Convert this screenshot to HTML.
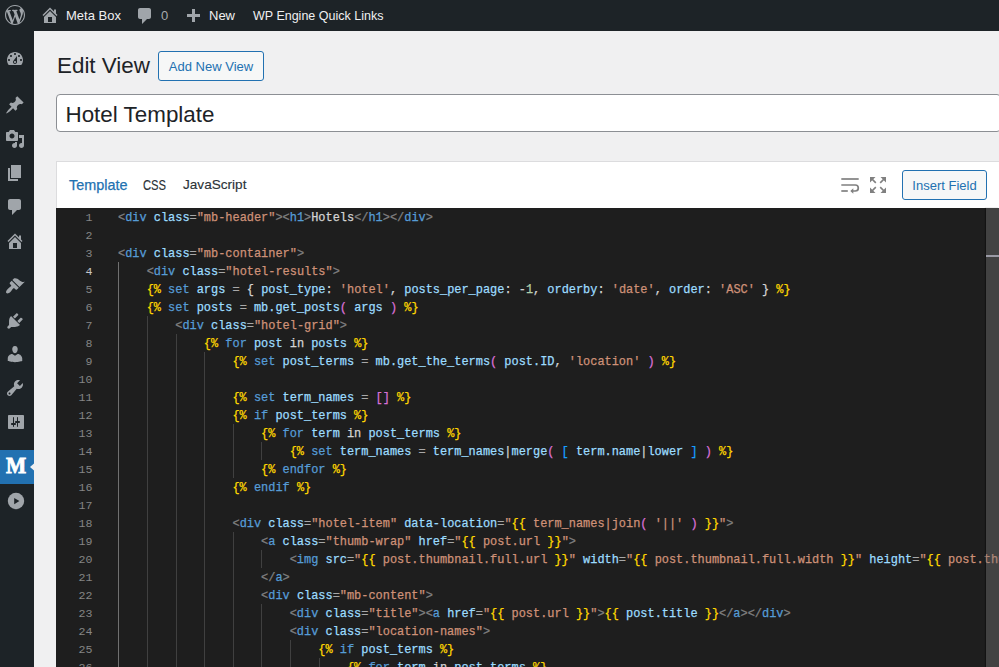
<!DOCTYPE html>
<html><head><meta charset="utf-8">
<style>
html,body{margin:0;padding:0;width:999px;height:667px;overflow:hidden;background:#f0f0f1;font-family:"Liberation Sans",sans-serif;}
.abs{position:absolute;}
.ic{position:absolute;overflow:visible;}
#adminbar{position:absolute;left:0;top:0;width:999px;height:31px;background:#1d2327;}
#sidebar{position:absolute;left:0;top:31px;width:34px;height:636px;background:#1d2327;}
.ab-t{position:absolute;top:0;height:31px;line-height:31px;font-size:13px;color:#f0f0f1;white-space:nowrap;}
.si{position:absolute;left:0;width:34px;}
h1{position:absolute;margin:0;left:57px;top:50px;font-size:22.4px;font-weight:400;color:#1d2327;line-height:32px;}
.btn{position:absolute;box-sizing:border-box;border:1px solid #2271b1;border-radius:3px;background:#f6f7f7;color:#2271b1;font-size:13px;text-align:center;white-space:nowrap;}
#title{position:absolute;box-sizing:border-box;left:56px;top:94px;width:945px;height:38px;border:1px solid #8c8f94;border-radius:4px;background:#fff;}
#title span{position:absolute;left:8.5px;top:0.5px;line-height:37px;font-size:22.4px;color:#1d2327;}
#panel{position:absolute;left:56px;top:161px;width:960px;height:520px;background:#fff;border-top:1px solid #dcdcde;border-left:1px solid #dcdcde;box-sizing:border-box;}
.tab{position:absolute;top:176px;font-size:14px;line-height:18px;color:#1d2327;white-space:nowrap;}
#editor{position:absolute;left:56px;top:208px;width:943px;height:459px;background:#1e1e1e;overflow:hidden;}
#ruler{position:absolute;left:986px;top:208px;width:13px;height:459px;background:rgba(121,121,121,0.4);box-shadow:-1px 0 1px rgba(0,0,0,0.35);}
#rmark{position:absolute;left:986px;top:255px;width:13px;height:2px;background:#9a9aa5;}
.ln{position:absolute;left:0;width:36.5px;text-align:right;color:#858585;font-family:"Liberation Mono",monospace;font-size:11.6px;height:18px;line-height:18px;}
.cl{position:absolute;left:62px;white-space:pre;-webkit-text-stroke:0.25px;font-family:"Liberation Mono",monospace;font-size:11.93px;height:18px;line-height:18px;color:#d4d4d4;}
.g{position:absolute;width:1px;height:18px;background:#404040;}.g.act{background:#707070}.ln.act{color:#c6c6c6}.m{color:#b5cea8}
.t{color:#808080}.n{color:#569cd6}.a{color:#9cdcfe}.s{color:#ce9178}.y{color:#ffd700}.p{color:#da70d6}.b{color:#179fff}.k{color:#569cd6}.v{color:#9cdcfe}.w{color:#d4d4d4}.e{color:#a8a8a8}
</style></head><body>
<div id="adminbar">
  <div class="ab-t" style="left:66px;">Meta Box</div>
  <div class="ab-t" style="left:161px;color:#a7aaad;">0</div>
  <div class="ab-t" style="left:209px;">New</div>
  <div class="ab-t" style="left:253px;top:0.6px;font-size:12.5px;">WP Engine Quick Links</div>
</div>
<div id="sidebar">
  
</div>

<h1>Edit View</h1>
<div class="btn" style="left:158px;top:51px;width:106px;height:30px;line-height:30px;">Add New View</div>
<div id="title"><span>Hotel Template</span></div>

<div id="panel"></div>
<div class="tab" style="left:69px;color:#2271b1;font-size:14.4px;-webkit-text-stroke:0.25px #2271b1;">Template</div>
<div class="tab" style="left:143px;color:#2c3338;transform:scaleX(0.8);transform-origin:0 0;-webkit-text-stroke:0.15px #2c3338;">CSS</div>
<div class="tab" style="left:183px;color:#2c3338;font-size:13.6px;-webkit-text-stroke:0.15px #2c3338;">JavaScript</div>
<div class="btn" style="left:902px;top:170px;width:85px;height:30px;line-height:30px;">Insert Field</div>

<div id="editor">
<div class="ln" style="top:0.7px">1</div>
<div class="cl" style="top:1px"><span class="t">&lt;</span><span class="n">div</span> <span class="a">class</span><span class="e">=</span><span class="s">&quot;mb-header&quot;</span><span class="t">&gt;&lt;</span><span class="n">h1</span><span class="t">&gt;</span><span class="w">Hotels</span><span class="t">&lt;/</span><span class="n">h1</span><span class="t">&gt;&lt;/</span><span class="n">div</span><span class="t">&gt;</span></div>
<div class="ln" style="top:18.7px">2</div>
<div class="cl" style="top:19px"></div>
<div class="ln" style="top:36.7px">3</div>
<div class="cl" style="top:37px"><span class="t">&lt;</span><span class="n">div</span> <span class="a">class</span><span class="e">=</span><span class="s">&quot;mb-container&quot;</span><span class="t">&gt;</span></div>
<div class="ln act" style="top:54.7px">4</div>
<div class="g act" style="top:54px;left:62px"></div>
<div class="cl" style="top:55px">    <span class="t">&lt;</span><span class="n">div</span> <span class="a">class</span><span class="e">=</span><span class="s">&quot;hotel-results&quot;</span><span class="t">&gt;</span></div>
<div class="ln" style="top:72.7px">5</div>
<div class="g act" style="top:72px;left:62px"></div>
<div class="cl" style="top:73px">    <span class="y">{%</span> <span class="k">set</span> <span class="v">args</span> <span class="e">=</span> <span class="w">{</span> <span class="v">post_type</span><span class="w">:</span> <span class="s">&#x27;hotel&#x27;</span><span class="w">,</span> <span class="v">posts_per_page</span><span class="w">:</span> <span class="w">-</span><span class="m">1</span><span class="w">,</span> <span class="v">orderby</span><span class="w">:</span> <span class="s">&#x27;date&#x27;</span><span class="w">,</span> <span class="v">order</span><span class="w">:</span> <span class="s">&#x27;ASC&#x27;</span> <span class="w">}</span> <span class="y">%}</span></div>
<div class="ln" style="top:90.7px">6</div>
<div class="g act" style="top:90px;left:62px"></div>
<div class="cl" style="top:91px">    <span class="y">{%</span> <span class="k">set</span> <span class="v">posts</span> <span class="e">=</span> <span class="v">mb.get_posts</span><span class="p">(</span> <span class="v">args</span> <span class="p">)</span> <span class="y">%}</span></div>
<div class="ln" style="top:108.7px">7</div>
<div class="g act" style="top:108px;left:62px"></div>
<div class="g" style="top:108px;left:91px"></div>
<div class="cl" style="top:109px">        <span class="t">&lt;</span><span class="n">div</span> <span class="a">class</span><span class="e">=</span><span class="s">&quot;hotel-grid&quot;</span><span class="t">&gt;</span></div>
<div class="ln" style="top:126.7px">8</div>
<div class="g act" style="top:126px;left:62px"></div>
<div class="g" style="top:126px;left:91px"></div>
<div class="g" style="top:126px;left:120px"></div>
<div class="cl" style="top:127px">            <span class="y">{%</span> <span class="k">for</span> <span class="v">post</span> <span class="w">in</span> <span class="v">posts</span> <span class="y">%}</span></div>
<div class="ln" style="top:144.7px">9</div>
<div class="g act" style="top:144px;left:62px"></div>
<div class="g" style="top:144px;left:91px"></div>
<div class="g" style="top:144px;left:120px"></div>
<div class="g" style="top:144px;left:148px"></div>
<div class="cl" style="top:145px">                <span class="y">{%</span> <span class="k">set</span> <span class="v">post_terms</span> <span class="e">=</span> <span class="v">mb.get_the_terms</span><span class="p">(</span> <span class="v">post.ID</span><span class="w">,</span> <span class="s">&#x27;location&#x27;</span> <span class="p">)</span> <span class="y">%}</span></div>
<div class="ln" style="top:162.7px">10</div>
<div class="g act" style="top:162px;left:62px"></div>
<div class="g" style="top:162px;left:91px"></div>
<div class="g" style="top:162px;left:120px"></div>
<div class="g" style="top:162px;left:148px"></div>
<div class="cl" style="top:163px">                </div>
<div class="ln" style="top:180.7px">11</div>
<div class="g act" style="top:180px;left:62px"></div>
<div class="g" style="top:180px;left:91px"></div>
<div class="g" style="top:180px;left:120px"></div>
<div class="g" style="top:180px;left:148px"></div>
<div class="cl" style="top:181px">                <span class="y">{%</span> <span class="k">set</span> <span class="v">term_names</span> <span class="e">=</span> <span class="p">[]</span> <span class="y">%}</span></div>
<div class="ln" style="top:198.7px">12</div>
<div class="g act" style="top:198px;left:62px"></div>
<div class="g" style="top:198px;left:91px"></div>
<div class="g" style="top:198px;left:120px"></div>
<div class="g" style="top:198px;left:148px"></div>
<div class="cl" style="top:199px">                <span class="y">{%</span> <span class="k">if</span> <span class="v">post_terms</span> <span class="y">%}</span></div>
<div class="ln" style="top:216.7px">13</div>
<div class="g act" style="top:216px;left:62px"></div>
<div class="g" style="top:216px;left:91px"></div>
<div class="g" style="top:216px;left:120px"></div>
<div class="g" style="top:216px;left:148px"></div>
<div class="g" style="top:216px;left:177px"></div>
<div class="cl" style="top:217px">                    <span class="y">{%</span> <span class="k">for</span> <span class="v">term</span> <span class="w">in</span> <span class="v">post_terms</span> <span class="y">%}</span></div>
<div class="ln" style="top:234.7px">14</div>
<div class="g act" style="top:234px;left:62px"></div>
<div class="g" style="top:234px;left:91px"></div>
<div class="g" style="top:234px;left:120px"></div>
<div class="g" style="top:234px;left:148px"></div>
<div class="g" style="top:234px;left:177px"></div>
<div class="g" style="top:234px;left:205px"></div>
<div class="cl" style="top:235px">                        <span class="y">{%</span> <span class="k">set</span> <span class="v">term_names</span> <span class="e">=</span> <span class="v">term_names</span><span class="w">|</span><span class="v">merge</span><span class="p">(</span> <span class="b">[</span> <span class="v">term.name</span><span class="w">|</span><span class="v">lower</span> <span class="b">]</span> <span class="p">)</span> <span class="y">%}</span></div>
<div class="ln" style="top:252.7px">15</div>
<div class="g act" style="top:252px;left:62px"></div>
<div class="g" style="top:252px;left:91px"></div>
<div class="g" style="top:252px;left:120px"></div>
<div class="g" style="top:252px;left:148px"></div>
<div class="g" style="top:252px;left:177px"></div>
<div class="cl" style="top:253px">                    <span class="y">{%</span> <span class="k">endfor</span> <span class="y">%}</span></div>
<div class="ln" style="top:270.7px">16</div>
<div class="g act" style="top:270px;left:62px"></div>
<div class="g" style="top:270px;left:91px"></div>
<div class="g" style="top:270px;left:120px"></div>
<div class="g" style="top:270px;left:148px"></div>
<div class="cl" style="top:271px">                <span class="y">{%</span> <span class="k">endif</span> <span class="y">%}</span></div>
<div class="ln" style="top:288.7px">17</div>
<div class="g act" style="top:288px;left:62px"></div>
<div class="g" style="top:288px;left:91px"></div>
<div class="g" style="top:288px;left:120px"></div>
<div class="g" style="top:288px;left:148px"></div>
<div class="cl" style="top:289px">                </div>
<div class="ln" style="top:306.7px">18</div>
<div class="g act" style="top:306px;left:62px"></div>
<div class="g" style="top:306px;left:91px"></div>
<div class="g" style="top:306px;left:120px"></div>
<div class="g" style="top:306px;left:148px"></div>
<div class="cl" style="top:307px">                <span class="t">&lt;</span><span class="n">div</span> <span class="a">class</span><span class="e">=</span><span class="s">&quot;hotel-item&quot;</span> <span class="a">data-location</span><span class="e">=</span><span class="s">&quot;</span><span class="y">{{</span> <span class="s">term_names|join</span><span class="p">(</span> <span class="s">&#x27;||&#x27;</span> <span class="p">)</span> <span class="y">}}</span><span class="s">&quot;</span><span class="t">&gt;</span></div>
<div class="ln" style="top:324.7px">19</div>
<div class="g act" style="top:324px;left:62px"></div>
<div class="g" style="top:324px;left:91px"></div>
<div class="g" style="top:324px;left:120px"></div>
<div class="g" style="top:324px;left:148px"></div>
<div class="g" style="top:324px;left:177px"></div>
<div class="cl" style="top:325px">                    <span class="t">&lt;</span><span class="n">a</span> <span class="a">class</span><span class="e">=</span><span class="s">&quot;thumb-wrap&quot;</span> <span class="a">href</span><span class="e">=</span><span class="s">&quot;</span><span class="y">{{</span> <span class="s">post.url</span> <span class="y">}}</span><span class="s">&quot;</span><span class="t">&gt;</span></div>
<div class="ln" style="top:342.7px">20</div>
<div class="g act" style="top:342px;left:62px"></div>
<div class="g" style="top:342px;left:91px"></div>
<div class="g" style="top:342px;left:120px"></div>
<div class="g" style="top:342px;left:148px"></div>
<div class="g" style="top:342px;left:177px"></div>
<div class="g" style="top:342px;left:205px"></div>
<div class="cl" style="top:343px">                        <span class="t">&lt;</span><span class="n">img</span> <span class="a">src</span><span class="e">=</span><span class="s">&quot;</span><span class="y">{{</span> <span class="s">post.thumbnail.full.url</span> <span class="y">}}</span><span class="s">&quot;</span> <span class="a">width</span><span class="e">=</span><span class="s">&quot;</span><span class="y">{{</span> <span class="s">post.thumbnail.full.width</span> <span class="y">}}</span><span class="s">&quot;</span> <span class="a">height</span><span class="e">=</span><span class="s">&quot;</span><span class="y">{{</span> <span class="s">post.thumbnail.full.height</span> <span class="y">}}</span><span class="s">&quot;</span> <span class="t">/&gt;</span></div>
<div class="ln" style="top:360.7px">21</div>
<div class="g act" style="top:360px;left:62px"></div>
<div class="g" style="top:360px;left:91px"></div>
<div class="g" style="top:360px;left:120px"></div>
<div class="g" style="top:360px;left:148px"></div>
<div class="g" style="top:360px;left:177px"></div>
<div class="cl" style="top:361px">                    <span class="t">&lt;/</span><span class="n">a</span><span class="t">&gt;</span></div>
<div class="ln" style="top:378.7px">22</div>
<div class="g act" style="top:378px;left:62px"></div>
<div class="g" style="top:378px;left:91px"></div>
<div class="g" style="top:378px;left:120px"></div>
<div class="g" style="top:378px;left:148px"></div>
<div class="g" style="top:378px;left:177px"></div>
<div class="cl" style="top:379px">                    <span class="t">&lt;</span><span class="n">div</span> <span class="a">class</span><span class="e">=</span><span class="s">&quot;mb-content&quot;</span><span class="t">&gt;</span></div>
<div class="ln" style="top:396.7px">23</div>
<div class="g act" style="top:396px;left:62px"></div>
<div class="g" style="top:396px;left:91px"></div>
<div class="g" style="top:396px;left:120px"></div>
<div class="g" style="top:396px;left:148px"></div>
<div class="g" style="top:396px;left:177px"></div>
<div class="g" style="top:396px;left:205px"></div>
<div class="cl" style="top:397px">                        <span class="t">&lt;</span><span class="n">div</span> <span class="a">class</span><span class="e">=</span><span class="s">&quot;title&quot;</span><span class="t">&gt;&lt;</span><span class="n">a</span> <span class="a">href</span><span class="e">=</span><span class="s">&quot;</span><span class="y">{{</span> <span class="s">post.url</span> <span class="y">}}</span><span class="s">&quot;</span><span class="t">&gt;</span><span class="y">{{</span> <span class="v">post.title</span> <span class="y">}}</span><span class="t">&lt;/</span><span class="n">a</span><span class="t">&gt;&lt;/</span><span class="n">div</span><span class="t">&gt;</span></div>
<div class="ln" style="top:414.7px">24</div>
<div class="g act" style="top:414px;left:62px"></div>
<div class="g" style="top:414px;left:91px"></div>
<div class="g" style="top:414px;left:120px"></div>
<div class="g" style="top:414px;left:148px"></div>
<div class="g" style="top:414px;left:177px"></div>
<div class="g" style="top:414px;left:205px"></div>
<div class="cl" style="top:415px">                        <span class="t">&lt;</span><span class="n">div</span> <span class="a">class</span><span class="e">=</span><span class="s">&quot;location-names&quot;</span><span class="t">&gt;</span></div>
<div class="ln" style="top:432.7px">25</div>
<div class="g act" style="top:432px;left:62px"></div>
<div class="g" style="top:432px;left:91px"></div>
<div class="g" style="top:432px;left:120px"></div>
<div class="g" style="top:432px;left:148px"></div>
<div class="g" style="top:432px;left:177px"></div>
<div class="g" style="top:432px;left:205px"></div>
<div class="g" style="top:432px;left:234px"></div>
<div class="cl" style="top:433px">                            <span class="y">{%</span> <span class="k">if</span> <span class="v">post_terms</span> <span class="y">%}</span></div>
<div class="ln" style="top:450.7px">26</div>
<div class="g act" style="top:450px;left:62px"></div>
<div class="g" style="top:450px;left:91px"></div>
<div class="g" style="top:450px;left:120px"></div>
<div class="g" style="top:450px;left:148px"></div>
<div class="g" style="top:450px;left:177px"></div>
<div class="g" style="top:450px;left:205px"></div>
<div class="g" style="top:450px;left:234px"></div>
<div class="g" style="top:450px;left:263px"></div>
<div class="cl" style="top:451px">                                <span class="y">{%</span> <span class="k">for</span> <span class="v">term</span> <span class="w">in</span> <span class="v">post_terms</span> <span class="y">%}</span></div>
</div>
<div id="ruler"></div><div id="rmark"></div>
<svg class="ic" style="left:5px;top:5px" width="20" height="20" viewBox="0 0 20 20"><path fill="#a0a5aa" fill-rule="evenodd" d="M20 10c0-5.51-4.49-10-10-10C4.48 0 0 4.49 0 10c0 5.52 4.48 10 10 10 5.51 0 10-4.48 10-10zM7.78 15.37L4.37 6.22c.55-.02 1.17-.08 1.17-.08.5-.06.44-1.13-.06-1.11 0 0-1.45.11-2.37.11-.18 0-.37 0-.58-.01C4.12 2.69 6.87 1.110 10 1.11c2.330 0 4.45.87 6.05 2.34-.68-.11-1.65.39-1.65 1.58 0 .74.45 1.36.9 2.1.35.61.55 1.36.55 2.46 0 1.49-1.4 5-1.4 5l-3.03-8.37c.54-.02.82-.17.82-.17.5-.05.44-1.25-.06-1.22 0 0-1.44.12-2.38.12-.87 0-2.33-.12-2.33-.12-.5-.03-.56 1.2-.06 1.22l.92.08 1.26 3.41zM17.41 10c.24-.64.74-1.870.43-4.25.7 1.29 1.05 2.71 1.05 4.25 0 3.29-1.73 6.24-4.4 7.78.97-2.59 1.94-5.2 2.92-7.78zM6.1 18.09C3.12 16.65 1.11 13.53 1.11 10c0-1.3.23-2.48.72-3.59C3.25 10.3 4.67 14.2 6.1 18.09zm4.030-6.63l2.58 6.98c-.86.29-1.76.45-2.71.45-.79 0-1.57-.11-2.29-.33.81-2.38 1.62-4.74 2.42-7.1z"/></svg>
<svg class="ic" style="left:40.2px;top:5.4px" width="20" height="20" viewBox="0 0 20 20"><path fill="#a0a5aa" fill-rule="evenodd" d="M16 8.5l1.53 1.53-1.06 1.06L10 4.62l-6.47 6.47-1.06-1.06L10 2.5l4 4v-2h2v4zm-6-2.46l6 5.99V18H4v-5.97zM12 17v-5H8v5h4z"/></svg>
<svg class="ic" style="left:135.1px;top:6.3px" width="20" height="20" viewBox="0 0 20 20"><path fill="#a0a5aa" fill-rule="evenodd" d="M5 2h9c1.1 0 2 .9 2 2v7c0 1.1-.9 2-2 2h-2l-5 5v-5H5c-1.1 0-2-.9-2-2V4c0-1.1.9-2 2-2z"/></svg>
<svg class="ic" style="left:183px;top:7.3px" width="20" height="20" viewBox="0 0 20 20"><path fill="#a0a5aa" fill-rule="evenodd" d="M17 7v3h-5v5H9v-5H4V7h5V2h3v5h5z"/></svg>
<svg class="ic" style="left:5.3px;top:49.4px" width="20" height="20" viewBox="0 0 20 20"><path fill="#a0a5aa" fill-rule="evenodd" d="M3.76 16h12.48c1.1-1.37 1.76-3.11 1.76-5 0-4.42-3.58-8-8-8s-8 3.58-8 8c0 1.89.66 3.63 1.76 5zM10 4c.55 0 1 .45 1 1s-.45 1-1 1-1-.45-1-1 .45-1 1-1zM6 6c.55 0 1 .45 1 1s-.45 1-1 1-1-.45-1-1 .45-1 1-1zm8 0c.55 0 1 .45 1 1s-.45 1-1 1-1-.45-1-1 .45-1 1-1zm-5.37 5.55L12 7v6c0 1.1-.9 2-2 2s-2-.9-2-2c0-.57.24-1.08.63-1.45zM4 10c.55 0 1 .45 1 1s-.45 1-1 1-1-.45-1-1 .45-1 1-1zm12 0c.55 0 1 .45 1 1s-.45 1-1 1-1-.45-1-1 .45-1 1-1zm-5 3c0-.55-.45-1-1-1s-1 .45-1 1 .45 1 1 1 1-.45 1-1z"/></svg>
<svg class="ic" style="left:5px;top:94.6px" width="20" height="20" viewBox="0 0 20 20"><path fill="#a0a5aa" fill-rule="evenodd" d="M10.44 3.02l1.82-1.82 6.36 6.35-1.83 1.82c-1.05-.68-2.48-.57-3.41.36l-.75.75c-.92.93-1.04 2.350-.35 3.41l-1.83 1.82-2.41-2.41-2.8 2.79c-.42.42-3.38 2.71-3.8 2.29s1.86-3.39 2.28-3.81l2.790-2.79L4.1 9.36l1.83-1.82c1.05.69 2.48.57 3.4-.36l.75-.75c.93-.92 1.05-2.350.36-3.41z"/></svg>
<svg class="ic" style="left:5px;top:129.3px" width="20" height="20" viewBox="0 0 20 20"><path fill="#a0a5aa" fill-rule="evenodd" d="M13 11V4c0-.55-.45-1-1-1h-1.67L9 1H5L3.67 3H2c-.55 0-1 .45-1 1v7c0 .55.45 1 1 1h10c.55 0 1-.45 1-1zM7 4.5c1.38 0 2.5 1.12 2.5 2.5S8.38 9.5 7 9.5 4.5 8.38 4.5 7 5.62 4.5 7 4.5zM14 6h5v10.5c0 1.38-1.12 2.5-2.5 2.5S14 17.88 14 16.5s1.12-2.5 2.5-2.5c.17 0 .34.02.5.05V9h-3V6zm-4 8.05V13h2v3.5c0 1.38-1.12 2.5-2.5 2.5S7 17.88 7 16.5 8.12 14 9.5 14c.17 0 .34.02.5.05z"/></svg>
<svg class="ic" style="left:5px;top:163.1px" width="20" height="20" viewBox="0 0 20 20"><path fill="#a0a5aa" fill-rule="evenodd" d="M6 15V2h10v13H6zm-1 1h8v2H3V5h2v11z"/></svg>
<svg class="ic" style="left:5px;top:196.8px" width="20" height="20" viewBox="0 0 20 20"><path fill="#a0a5aa" fill-rule="evenodd" d="M5 2h9c1.1 0 2 .9 2 2v7c0 1.1-.9 2-2 2h-2l-5 5v-5H5c-1.1 0-2-.9-2-2V4c0-1.1.9-2 2-2z"/></svg>
<svg class="ic" style="left:5px;top:230.6px" width="20" height="20" viewBox="0 0 20 20"><path fill="#a0a5aa" fill-rule="evenodd" d="M16 8.5l1.53 1.53-1.06 1.06L10 4.62l-6.47 6.47-1.06-1.06L10 2.5l4 4v-2h2v4zm-6-2.46l6 5.99V18H4v-5.97zM12 17v-5H8v5h4z"/></svg>
<svg class="ic" style="left:5px;top:276px" width="20" height="20" viewBox="0 0 20 20"><path fill="#a0a5aa" fill-rule="evenodd" d="M14.48 11.06L7.41 3.99l1.5-1.5c.5-.56 2.3-.47 3.51.32 1.21.8 1.43 1.28 2.91 2.1 1.18.64 2.45 1.26 4.45.85zm-.71.71L6.7 4.7 4.93 6.47c-.39.39-.39 1.02 0 1.41l1.06 1.06c.39.39.39 1.03 0 1.42-.6.6-1.43 1.11-2.21 1.69-.35.26-.7.53-1.01.84C1.43 14.23.4 16.08 1.4 17.07c.99 1 2.84-.03 4.18-1.36.31-.31.58-.66.85-1.02.57-.78 1.08-1.61 1.69-2.210.39-.39 1.02-.39 1.41 0l1.06 1.06c.39.39 1.02.39 1.41 0z"/></svg>
<svg class="ic" style="left:5px;top:310.5px" width="20" height="20" viewBox="0 0 20 20"><path fill="#a0a5aa" fill-rule="evenodd" d="M13.11 4.36L9.87 7.6 8 5.73l3.24-3.24c.35-.34 1.05-.2 1.56.32.52.51.66 1.21.31 1.55zm-8 1.77l.91-1.12 9.01 9.01-1.19.84c-.71.71-2.63 1.16-3.82 1.16H6.14L4.9 17.26c-.59.59-1.54.59-2.12 0-.59-.58-.59-1.53 0-2.12l1.24-1.24v-3.88c0-1.13.4-3.19 1.09-3.89zm7.26 3.97l3.24-3.24c.34-.35 1.04-.21 1.55.31.52.51.66 1.21.31 1.55l-3.24 3.25z"/></svg>
<svg class="ic" style="left:5px;top:344px" width="20" height="20" viewBox="0 0 20 20"><path fill="#a0a5aa" fill-rule="evenodd" d="M10 9.25c-2.27 0-2.73-3.44-2.73-3.44C7 4.02 7.82 2 9.97 2c2.16 0 2.98 2.02 2.71 3.81 0 0-.41 3.44-2.68 3.44zm0 2.57L12.72 10c2.39 0 4.52 2.33 4.52 4.53v2.49s-3.65 1.13-7.24 1.13c-3.65 0-7.24-1.13-7.240-1.13v-2.49c0-2.25 1.94-4.48 4.47-4.48z"/></svg>
<svg class="ic" style="left:5px;top:378.3px" width="20" height="20" viewBox="0 0 20 20"><path fill="#a0a5aa" fill-rule="evenodd" d="M16.68 9.77c-1.34 1.34-3.3 1.67-4.95.99l-5.41 6.52c-.99.99-2.59.99-3.58 0s-.99-2.59 0-3.57l6.52-5.42c-.68-1.65-.35-3.61.99-4.95 1.28-1.28 3.12-1.62 4.72-1.06l-2.89 2.89 2.82 2.82 2.86-2.87c.53 1.58.18 3.39-1.08 4.65zM3.81 16.21c.4.39 1.04.39 1.43 0 .4-.4.4-1.04 0-1.43-.39-.4-1.03-.4-1.43 0-.39.39-.39 1.03 0 1.43z"/></svg>
<svg class="ic" style="left:5.5px;top:411.6px" width="20" height="20" viewBox="0 0 20 20"><path fill="#a0a5aa" fill-rule="evenodd" d="M18 16V4c0-.55-.45-1-1-1H3c-.55 0-1 .45-1 1v12c0 .55.45 1 1 1h14c.55 0 1-.45 1-1zM8 11h1c.55 0 1 .45 1 1s-.45 1-1 1H8v1.5c0 .28-.22.5-.5.5s-.5-.22-.5-.5V13H6c-.55 0-1-.45-1-1s.45-1 1-1h1V5.5c0-.28.22-.5.5-.5s.5.22.5.5V11zm5-2h-1V5.5c0-.28-.22-.5-.5-.5s-.5.22-.5.5V9h-1c-.55 0-1 .45-1 1s.45 1 1 1h1v3.5c0 .28.22.5.5.5s.5-.22.5-.5V11h1c.55 0 1-.45 1-1s-.45-1-1-1z"/></svg>
<svg class="ic" style="left:836px;top:172px" width="28" height="26" viewBox="836 172 28 26"><g fill="none" stroke="#808080" stroke-width="1.7"><path d="M841.3 179H858.7"/><path d="M841.3 185H855.3A3 3 0 0 1 855.3 191H851.5"/><path d="M841.3 191H847.8"/></g><path d="M850.3 191L853.3 188.2V193.8Z" fill="#808080"/></svg>
<svg class="ic" style="left:866px;top:172px" width="26" height="26" viewBox="866 172 26 26"><g fill="#808080"><path d="M870 177h5.5l-5.5 5.5z"/><path d="M886 177h-5.5l5.5 5.5z"/><path d="M870 193h5.5l-5.5-5.5z"/><path d="M886 193h-5.5l5.5-5.5z"/></g><g stroke="#808080" stroke-width="1.7"><path d="M872 179L875.8 182.8"/><path d="M884 179L880.2 182.8"/><path d="M872 191L875.8 187.2"/><path d="M884 191L880.2 187.2"/></g></svg>

<div class="abs" style="left:0;top:450px;width:34px;height:34px;background:#2271b1;"></div>
<div class="abs" id="mlogo" style="left:6px;top:450px;width:24px;height:30px;font-family:'Liberation Serif',serif;font-weight:700;font-size:24px;line-height:30px;color:#fff;-webkit-text-stroke:0.9px #fff;transform:scaleX(0.89);transform-origin:0 0;">M</div>
<svg class="ic" style="left:29px;top:462px" width="5" height="10" viewBox="0 0 5 10"><polygon points="5,1.5 1,5 5,8.5" fill="#f0f0f1"/></svg>
<svg class="ic" style="left:7px;top:492px" width="18" height="18" viewBox="0 0 18 18"><circle cx="9" cy="9" r="8.2" fill="#a0a5aa"/><polygon points="7.2,6 12.4,9 7.2,12.3" fill="#1d2327"/></svg>

</body></html>
